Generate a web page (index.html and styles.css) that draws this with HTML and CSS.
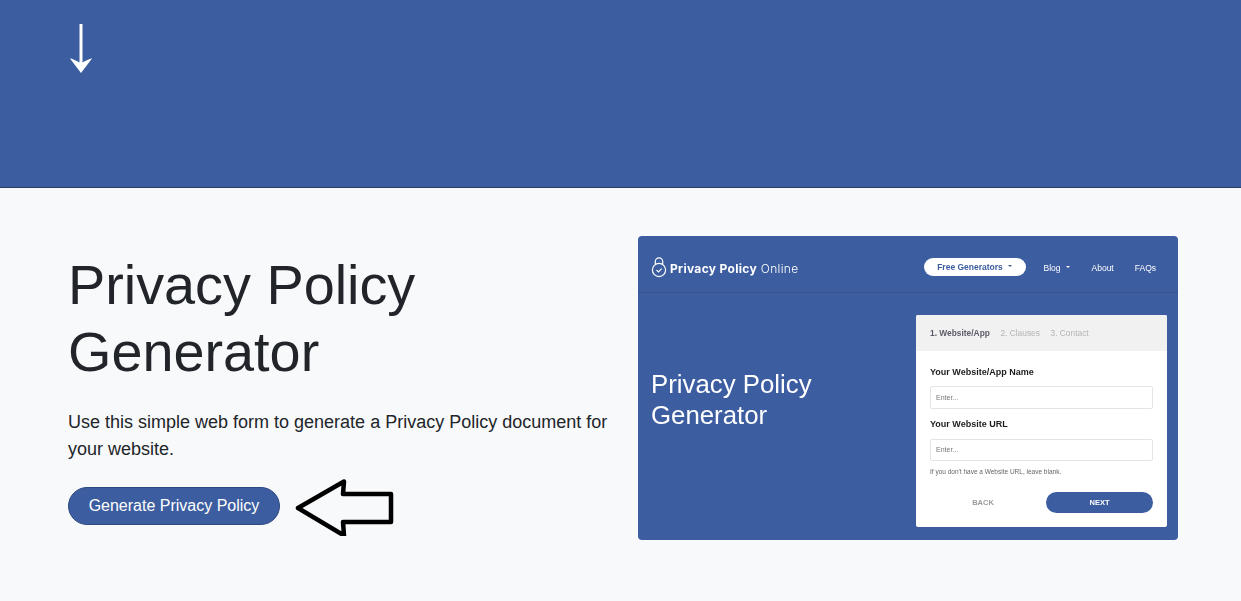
FILE: index.html
```html
<!DOCTYPE html>
<html lang="en">
<head>
<meta charset="utf-8">
<title>Privacy Policy Generator</title>
<link rel="stylesheet" href="styles.css">
</head>
<body>
<header class="band">
  <svg class="down-arrow" width="24" height="50" viewBox="0 0 24 50" aria-hidden="true">
    <path d="M10.500 0h3v38.500c2.200-1.300 5-2.800 9.700-4.200L12 49 .8 34.300c4.700 1.400 7.500 2.900 9.700 4.200z" fill="#fff"/>
  </svg>
</header>
<main class="content">
  <section class="intro">
    <h1 class="title">Privacy Policy Generator</h1>
    <p class="lead">Use this simple web form to generate a Privacy Policy document for your website.</p>
    <div class="cta-row">
      <a class="cta" href="#">Generate Privacy Policy</a>
      <svg class="big-arrow" width="100" height="60" viewBox="0 0 100 60" aria-hidden="true">
        <path d="M3 32 49 5.500 48 18h48v28H48l1 13.500z" fill="none" stroke="#000" stroke-width="4.500" stroke-linejoin="round"/>
      </svg>
    </div>
  </section>
  <aside class="preview">
    <div class="preview-nav">
      <div class="brand">
        <svg class="lock" width="16" height="21" viewBox="0 0 16 21" aria-hidden="true">
          <circle cx="8" cy="13" r="6.600" fill="none" stroke="#fff" stroke-width="1.200"/>
          <path d="M4.300 7.500V4.600a3.700 3.700 0 0 1 7.400 0v2.900" fill="none" stroke="#fff" stroke-width="1.200"/>
          <path d="M5.500 13l2 2 3.200-3.400" fill="none" stroke="#fff" stroke-width="1.100"/>
        </svg>
        <span class="brand-name"><b>Privacy Policy</b> Online</span>
      </div>
      <nav class="menu">
        <span class="pill">Free Generators<i class="caret caret-blue"></i></span>
        <span class="menu-item blog">Blog<i class="caret"></i></span>
        <span class="menu-item about">About</span>
        <span class="menu-item">FAQs</span>
      </nav>
    </div>
    <div class="preview-body">
      <div class="preview-title">Privacy Policy Generator</div>
      <div class="form-card">
        <div class="steps">
          <span class="step-on">1. Website/App</span>
          <span>2. Clauses</span>
          <span>3. Contact</span>
        </div>
        <div class="form-body">
          <div class="label">Your Website/App Name</div>
          <div class="input">Enter...</div>
          <div class="label label-second">Your Website URL</div>
          <div class="input input-second">Enter...</div>
          <div class="hint">If you don't have a Website URL, leave blank.</div>
          <div class="actions">
            <span class="back">BACK</span>
            <span class="next">NEXT</span>
          </div>
        </div>
      </div>
    </div>
  </aside>
</main>
</body>
</html>
```

FILE: styles.css
```css
* { box-sizing: border-box; }
html, body { margin: 0; padding: 0; }
body {
  background: #f8f9fb;
  font-family: "Liberation Sans", Arial, sans-serif;
  color: #212529;
  height: 601px;
  overflow: hidden;
}
.band {
  height: 188px;
  background: #3c5da0;
  border-bottom: 1px solid #2c3e63;
  padding: 24px 0 0 69px;
}
.down-arrow { display: block; }
.content {
  display: flex;
  align-items: flex-start;
  padding: 48px 63px 0 68px;
  justify-content: space-between;
}
.intro { width: 545px; padding-top: 15px; }
.title {
  margin: 0;
  font-size: 55.800px;
  line-height: 67px;
  font-weight: 400;
  width: 400px;
}
.lead {
  margin: 24px 0 0;
  font-size: 18px;
  line-height: 27px;
  color: #212529;
}
.cta-row {
  display: flex;
  align-items: center;
  gap: 15px;
  margin-top: 13px;
}
.cta {
  display: block;
  width: 212px;
  height: 38px;
  line-height: 36px;
  text-align: center;
  background: #3c5da0;
  border: 1px solid #2f4a82;
  border-radius: 19px;
  color: #fff;
  font-size: 16px;
  text-decoration: none;
}
.big-arrow { display: block; flex: none; }
.preview {
  width: 540px;
  height: 304px;
  background: #3c5da0;
  border-radius: 4px;
  color: #fff;
  flex: none;
  filter: blur(0.35px);
}
.preview-nav {
  height: 57px;
  border-bottom: 1px solid #36548f;
  display: flex;
  align-items: center;
  justify-content: space-between;
  padding: 6px 22px 0 13px;
}
.brand { display: flex; align-items: center; gap: 3px; padding-top: 3px; }
.lock { display: block; margin-top: -3px; }
.brand-name { font-family: Inter, sans-serif; font-size: 12px; letter-spacing: 0.32px; font-weight: 300; white-space: nowrap; }
.brand-name b { font-weight: 700; }
.menu { display: flex; align-items: center; font-size: 8.500px; padding-top: 1px; }
.pill {
  width: 102px;
  height: 18px;
  background: #fff;
  color: #3c5da0;
  border-radius: 9px;
  font-weight: 700;
  display: flex;
  align-items: center;
  justify-content: center;
  margin-right: 18px;
  margin-top: -2px;
}
.caret {
  display: inline-block;
  width: 0;
  height: 0;
  margin-left: 5px;
  border: 2.500px solid transparent;
  border-top-color: #fff;
  border-bottom: 0;
  vertical-align: middle;
  position: relative;
  top: -1px;
}
.caret-blue { border-top-color: #3c5da0; }
.menu-item { display: block; }
.blog { margin-right: 22px; }
.about { margin-right: 21px; }
.preview-body {
  display: flex;
  justify-content: space-between;
  padding: 22px 11px 0 13px;
}
.preview-title {
  width: 200px;
  font-size: 25.800px;
  line-height: 31px;
  margin-top: 54px;
  font-weight: 400;
}
.form-card {
  width: 251px;
  height: 212px;
  background: #fff;
  border-radius: 2px;
  color: #222;
  overflow: hidden;
}
.steps {
  height: 36px;
  background: #f1f1f1;
  display: flex;
  align-items: center;
  gap: 10.500px;
  padding-left: 14px;
  font-size: 8.400px;
  color: #b4b4b8;
}
.step-on { color: #5c5c68; font-weight: 700; }
.form-body { padding: 15px 14px 0; }
.label {
  font-size: 9px;
  line-height: 12px;
  font-weight: 700;
  color: #1c1c1c;
}
.label-second { margin-top: 9px; }
.input {
  height: 23px;
  margin-top: 8px;
  border: 1px solid #e2e4e8;
  border-radius: 2px;
  font-size: 7px;
  line-height: 21px;
  padding-left: 5px;
  color: #777;
}
.input-second { height: 22px; margin-top: 9px; line-height: 20px; }
.hint { font-size: 6.500px; line-height: 9px; margin-top: 6px; color: #666; }
.actions {
  display: flex;
  align-items: center;
  justify-content: space-between;
  margin-top: 16px;
}
.back {
  width: 106px;
  text-align: center;
  font-size: 7.500px;
  font-weight: 700;
  color: #9a9a9a;
}
.next {
  width: 107px;
  height: 21px;
  line-height: 21px;
  text-align: center;
  background: #3c5da0;
  border-radius: 11px;
  color: #fff;
  font-size: 7.500px;
  font-weight: 700;
}
```
